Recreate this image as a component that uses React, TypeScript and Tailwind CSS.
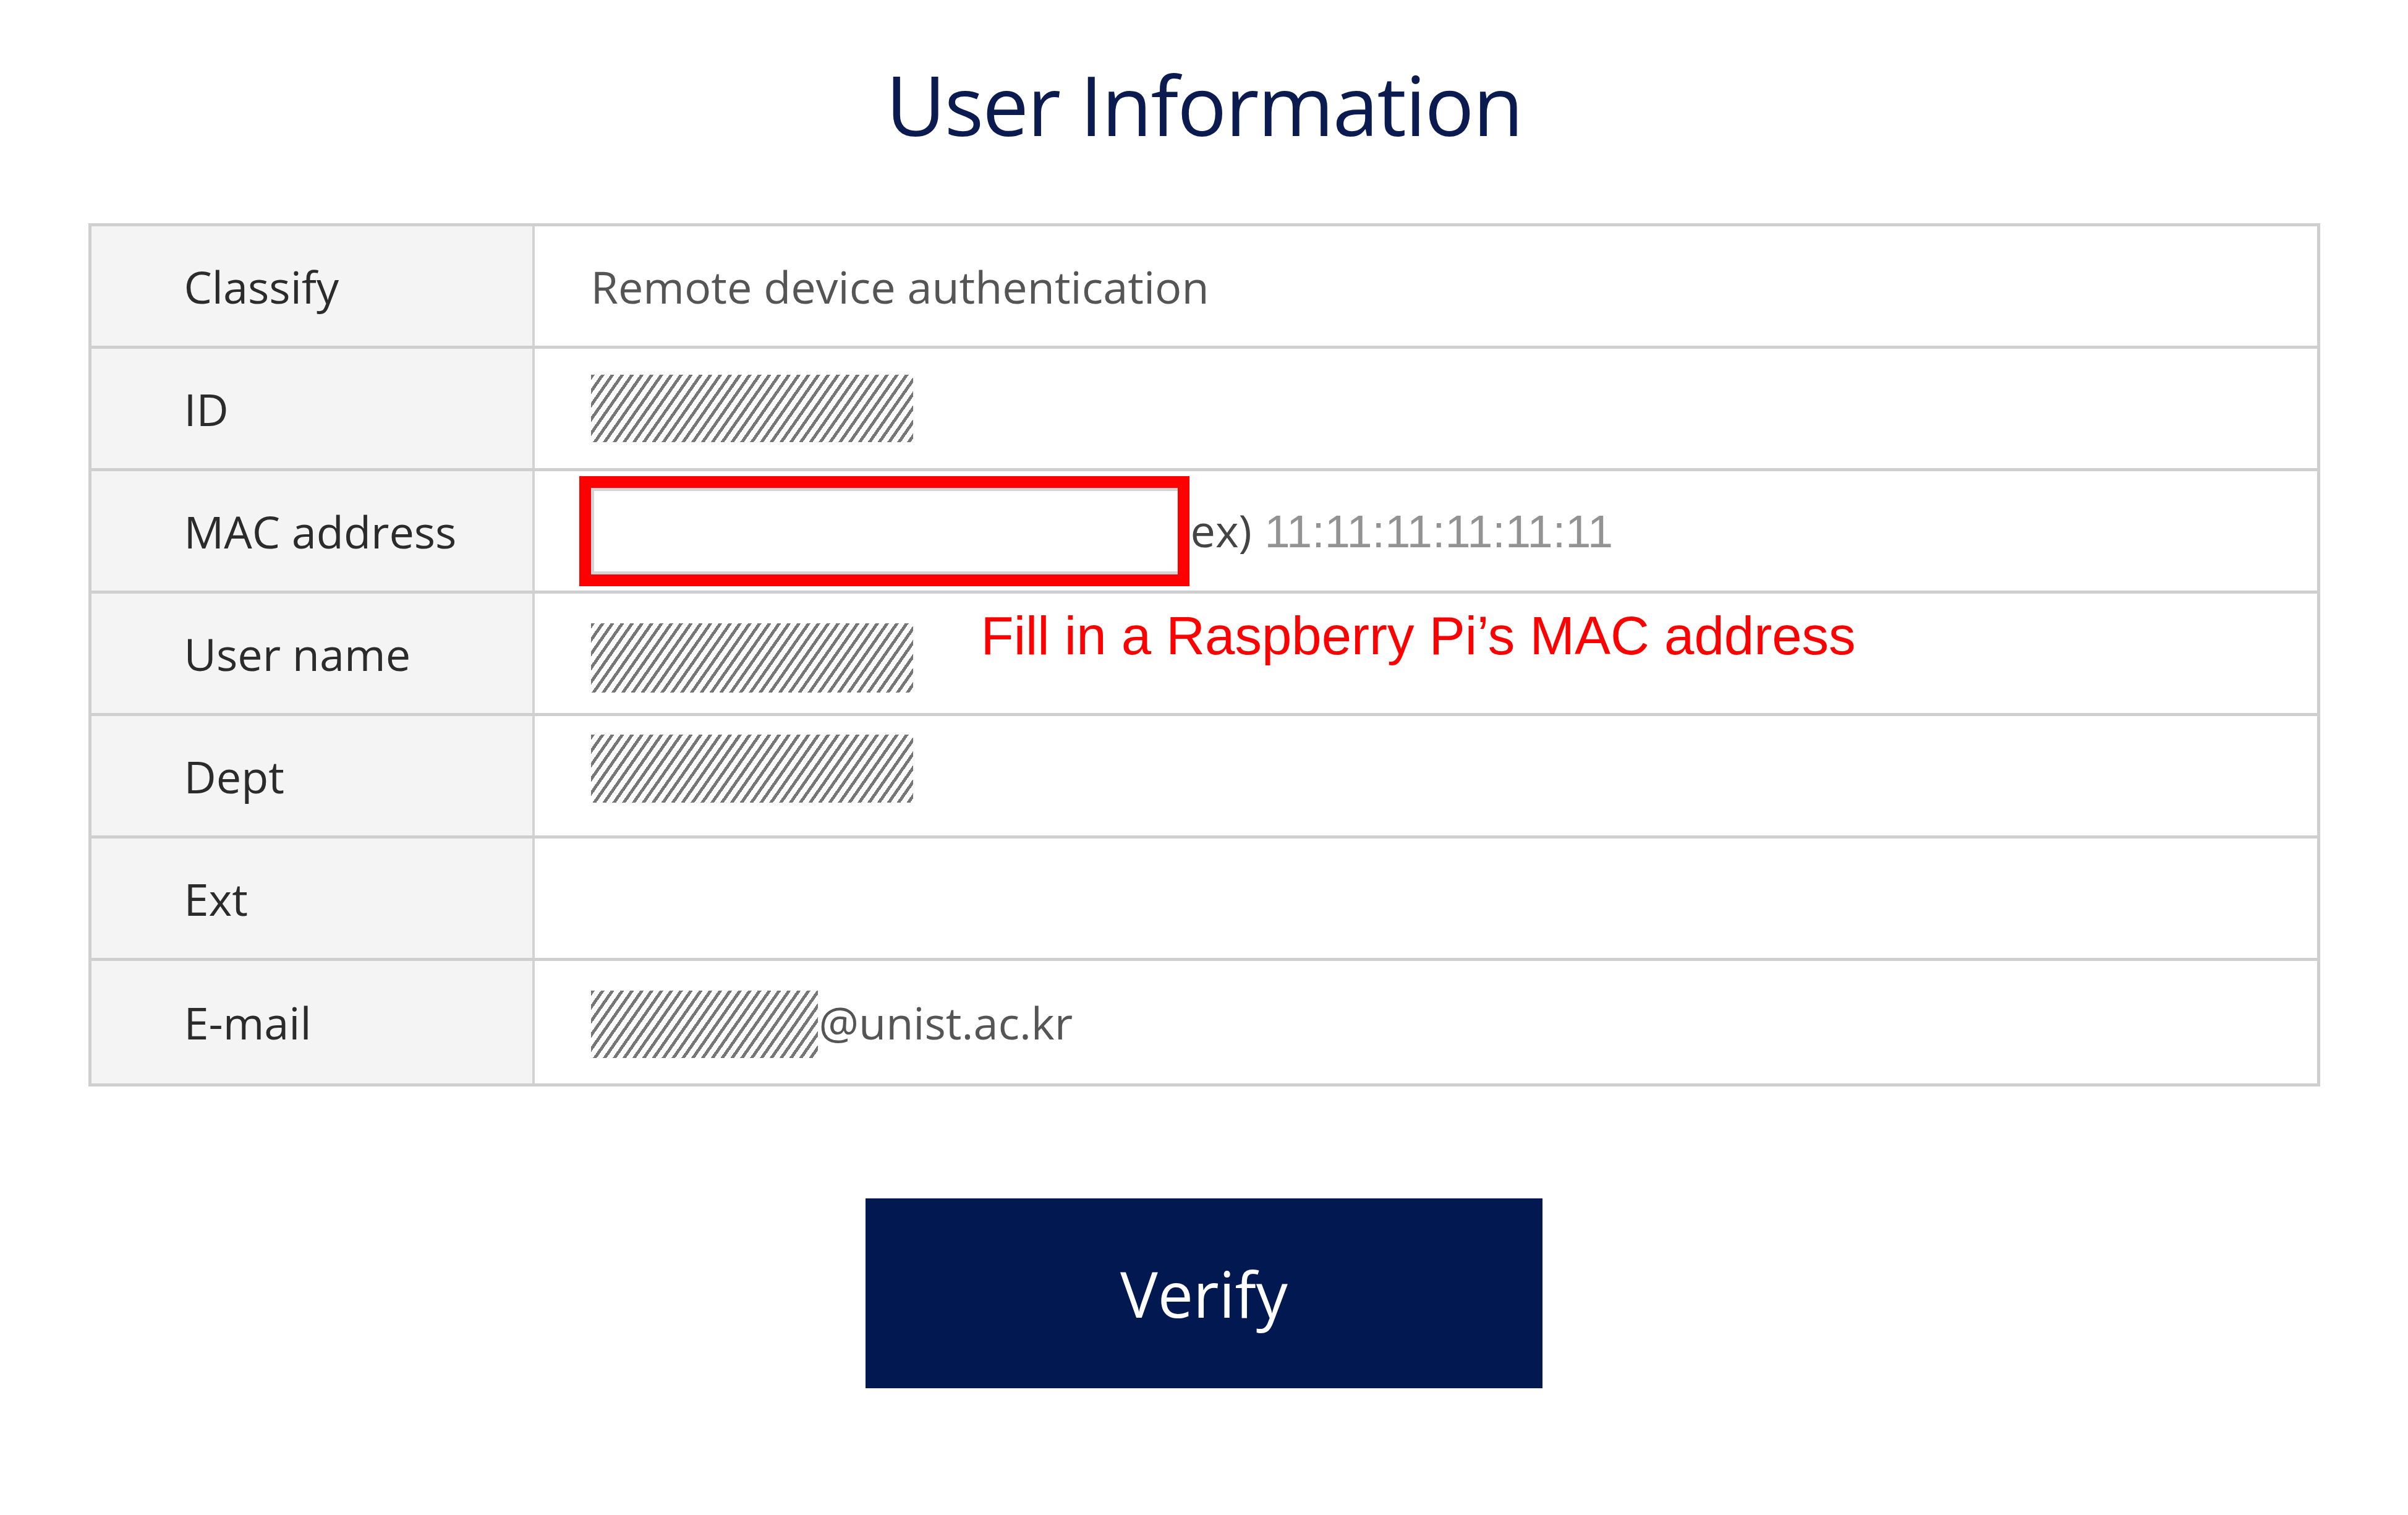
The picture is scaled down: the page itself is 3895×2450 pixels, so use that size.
import React from 'react';

const hatch =
  'bg-[repeating-linear-gradient(125deg,#767676_0px,#767676_5px,#ffffff_5px,#ffffff_13px)]';

interface RowProps {
  label: string;
  children?: React.ReactNode;
  last?: boolean;
}

function Row({ label, children, last }: RowProps) {
  return (
    <div className={`flex h-[198px] ${last ? '' : 'border-b-[5px] border-[#cfcfcf]'}`}>
      <div className="w-[717px] shrink-0 bg-[#f4f4f4] border-r-4 border-[#d3d3d3] flex items-center pl-[150px] text-[72px] text-[#2b2b2b]">
        {label}
      </div>
      <div className="relative flex-1 flex items-center pl-[91px] text-[72px] text-[#555555]">
        {children}
      </div>
    </div>
  );
}

export default function App() {
  return (
    <div className="min-h-screen w-full bg-white font-['Open_Sans',sans-serif] pt-[102px] pb-[200px]">
      <h1 className="text-center text-[133px] leading-none tracking-[-0.015em] text-[#0b1a4f]">
        User Information
      </h1>

      <div className="mx-auto mt-[126px] w-[3610px] border-[5px] border-[#cfcfcf]">
        <Row label="Classify">Remote device authentication</Row>

        <Row label="ID">
          <div className={`w-[521px] h-[109px] ${hatch}`} />
        </Row>

        <Row label="MAC address">
          <div className="relative w-[964px] h-[140px] bg-white border-t-[5px] border-l-[5px] border-b-[5px] border-[#d4d4d4]">
            {/* red highlight drawn over the input */}
            <div className="absolute -left-[24px] -top-[24px] -bottom-[24px] -right-[4px] border-[19px] border-[#ff0000]" />
          </div>
          <div className="ml-[6px] whitespace-nowrap">
            <span className="text-[72px] text-[#444444]">ex)</span>
            <span className="font-['Liberation_Sans',Arial,sans-serif] text-[74px] text-[#939393]">
              {' '}11:11:11:11:11:11
            </span>
          </div>
        </Row>

        <Row label="User name">
          <div className={`w-[521px] h-[112px] mt-[14px] ${hatch}`} />
          <div className="absolute left-[722px] top-[24px] whitespace-nowrap font-['Liberation_Sans',Arial,sans-serif] text-[87px] leading-none text-[#ff0000]">
            Fill in a Raspberry Pi’s MAC address
          </div>
        </Row>

        <Row label="Dept">
          <div className={`w-[521px] h-[110px] mb-[24px] ${hatch}`} />
        </Row>

        <Row label="Ext" />

        <Row label="E-mail" last>
          <div className={`w-[367px] h-[109px] mt-[6px] ${hatch}`} />
          <span className="ml-[2px]">@unist.ac.kr</span>
        </Row>
      </div>

      <div className="mt-[181px] flex justify-center">
        <button className="w-[1095px] h-[307px] bg-[#011851] text-white text-[102px] flex items-center justify-center">
          Verify
        </button>
      </div>
    </div>
  );
}
